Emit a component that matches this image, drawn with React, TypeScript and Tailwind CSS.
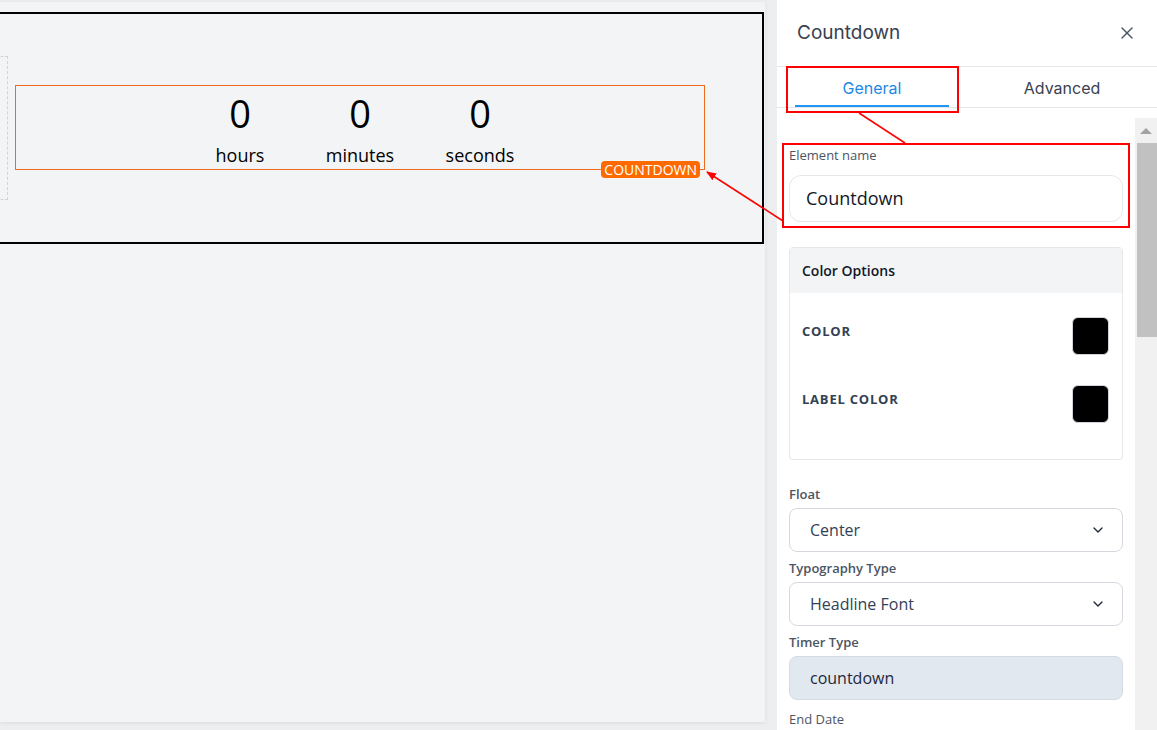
import React from 'react';
import { X, ChevronDown } from 'lucide-react';

const sans = { fontFamily: '"Open Sans", "Noto Sans", sans-serif' };
const ui = { fontFamily: 'Inter, Roboto, sans-serif' };

const units = [
  { value: '0', label: 'hours' },
  { value: '0', label: 'minutes' },
  { value: '0', label: 'seconds' },
];

const FieldLabel: React.FC<{ children: React.ReactNode; className?: string }> = ({ children, className = '' }) => (
  <div className={`text-[13px] leading-5 text-[#4b5563] mb-1 ${className}`}>{children}</div>
);

const Select: React.FC<{ value: string }> = ({ value }) => (
  <div className="flex h-[44px] items-center justify-between rounded-lg border border-[#d5d8de] bg-white pl-5 pr-4">
    <span className="text-[16px] text-[#334155]">{value}</span>
    <ChevronDown className="h-4 w-4 text-[#1f2937]" strokeWidth={2} />
  </div>
);

const ColorRow: React.FC<{ label: string }> = ({ label }) => (
  <div className="flex items-start justify-between">
    <span className="pt-[5px] text-[13px] font-bold uppercase tracking-[0.06em] text-[#334155]">{label}</span>
    <div className="h-[38px] w-[37px] rounded-md border border-[#d1d5db] bg-black" />
  </div>
);

export default function App() {
  return (
    <div className="relative flex h-[730px] w-[1157px] overflow-hidden bg-[#eceef0]" style={sans}>
      {/* canvas */}
      <div className="w-[777px] shrink-0 pt-[2px]">
        <div className="h-[720px] w-[765px] bg-[#f3f4f6] pt-[10px] shadow-[0_1px_4px_rgba(0,0,0,0.08)]">
          <div className="ml-[-10px] flex h-[232px] w-[774px] items-center border-2 border-black">
            <div className="h-[144px] w-[16px] shrink-0 border border-dashed border-[#cfd3dc]" />
            <div className="relative mb-[2px] ml-[7px] h-[85px] w-[690px] shrink-0 border border-[#f26b1d] pt-[4px]">
              <div className="flex justify-center">
                {units.map((u) => (
                  <div key={u.label} className="w-[120px] text-center text-black">
                    <div className="text-[38px] leading-[46px]">{u.value}</div>
                    <div className="mt-[7px] text-[18px] leading-6">{u.label}</div>
                  </div>
                ))}
              </div>
              <div className="absolute bottom-[-9px] right-[4px] rounded-sm bg-[#ff6a00] px-[3px] text-[14px] leading-[17px] text-white">
                COUNTDOWN
              </div>
            </div>
          </div>
        </div>
      </div>

      {/* settings panel */}
      <div className="flex w-[380px] shrink-0 flex-col bg-white">
        <div className="flex h-[67px] items-center justify-between border-b border-[#e5e7eb] pl-5 pr-5" style={ui}>
          <span className="text-[19px] text-[#374151]">Countdown</span>
          <X className="h-5 w-5 text-[#4b5563]" strokeWidth={1.75} />
        </div>
        <div className="flex h-[41px] border-b border-[#e5e7eb]" style={ui}>
          <div className="flex flex-1 flex-col items-center">
            <div className="flex flex-1 items-center pt-[4px] text-[16px] text-[#1e88e5]">General</div>
            <div className="h-[2px] w-[154px] self-center bg-[#2196f3]" />
          </div>
          <div className="flex flex-1 items-center justify-center pt-[2px] text-[16px] text-[#374151]">Advanced</div>
        </div>

        <div className="flex flex-1 overflow-hidden">
          <div className="flex-1 px-3 pt-[37px]">
            <FieldLabel className="mb-[10px]">Element name</FieldLabel>
            <div className="flex h-[47px] items-center rounded-xl border border-[#e5e7eb] pl-4 text-[18px] text-[#111827]">
              Countdown
            </div>

            <div className="mt-[25px] rounded-sm border border-[#e5e7eb]">
              <div className="flex h-[45px] items-center bg-[#f3f4f6] pl-3 text-[14px] font-semibold text-[#111827]">
                Color Options
              </div>
              <div className="flex flex-col gap-[30px] pb-[36px] pl-3 pr-[13px] pt-6">
                <ColorRow label="Color" />
                <ColorRow label="Label Color" />
              </div>
            </div>

            <FieldLabel className="mt-[24px] font-semibold">Float</FieldLabel>
            <Select value="Center" />
            <FieldLabel className="mt-[6px] font-semibold">Typography Type</FieldLabel>
            <Select value="Headline Font" />
            <FieldLabel className="mt-[6px] font-semibold">Timer Type</FieldLabel>
            <div className="flex h-[44px] items-center rounded-lg border border-[#d5dbe3] bg-[#e2e8f0] pl-5 text-[16px] text-[#1e293b]">
              countdown
            </div>
            <FieldLabel className="mt-[9px]">End Date</FieldLabel>
          </div>

          {/* scrollbar */}
          <div className="mt-[10px] flex w-[22px] flex-col bg-[#f1f1f1]">
            <div className="flex h-[25px] items-center justify-center">
              <div className="h-0 w-0 border-x-[6px] border-b-[6px] border-x-transparent border-b-[#a3a3a3]" />
            </div>
            <div className="ml-[2px] h-[194px] bg-[#c1c1c1]" />
          </div>
        </div>
      </div>

      {/* red annotations */}
      <svg className="pointer-events-none absolute left-0 top-0" width="1157" height="730">
        <defs>
          <marker id="ah" markerWidth="10" markerHeight="8" refX="9" refY="4" orient="auto" markerUnits="userSpaceOnUse">
            <path d="M0,0 L10,4 L0,8 Z" fill="#ff0000" />
          </marker>
        </defs>
        <rect x="787" y="67" width="171" height="45" fill="none" stroke="#ff0000" strokeWidth="2" />
        <rect x="783" y="144" width="346" height="83" fill="none" stroke="#ff0000" strokeWidth="2" />
        <line x1="859" y1="113" x2="905" y2="143" stroke="#ff0000" strokeWidth="1.5" />
        <line x1="783" y1="221" x2="707" y2="172" stroke="#ff0000" strokeWidth="1.5" markerEnd="url(#ah)" />
      </svg>
    </div>
  );
}
